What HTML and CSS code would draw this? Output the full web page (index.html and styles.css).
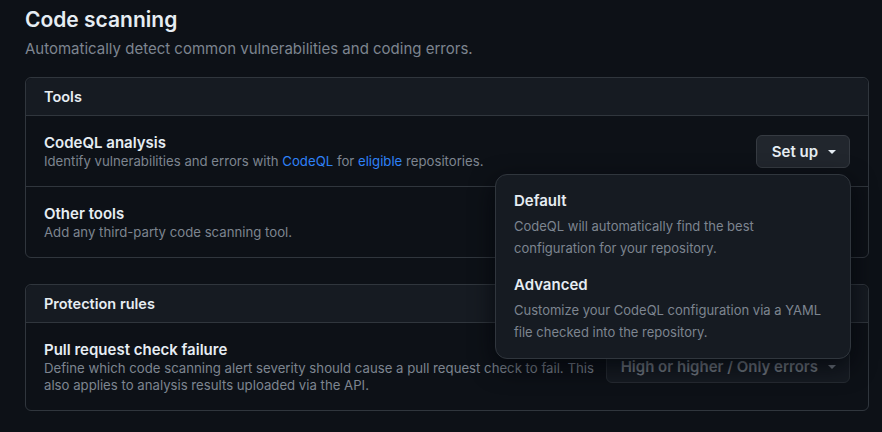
FILE: index.html
```html
<!DOCTYPE html>
<html lang="en">
<head>
<meta charset="utf-8">
<title>Code scanning</title>
<link rel="stylesheet" href="styles.css">
</head>
<body>
<main class="page">
  <h1 class="page-title">Code scanning</h1>
  <p class="page-desc">Automatically detect common vulnerabilities and coding errors.</p>

  <section class="box">
    <div class="box-header">Tools</div>
    <div class="box-row">
      <div class="row-text">
        <div class="row-title">CodeQL analysis</div>
        <div class="row-desc">Identify vulnerabilities and errors with <a class="link" href="#">CodeQL</a> for <a class="link" href="#">eligible</a> repositories.</div>
      </div>
      <div class="menu-anchor">
        <button class="btn" type="button">Set up <span class="caret"></span></button>
        <div class="overlay">
          <div class="overlay-item">
            <div class="overlay-title">Default</div>
            <div class="overlay-desc">CodeQL will automatically find the best configuration for your repository.</div>
          </div>
          <div class="overlay-item">
            <div class="overlay-title">Advanced</div>
            <div class="overlay-desc">Customize your CodeQL configuration via a YAML file checked into the repository.</div>
          </div>
        </div>
      </div>
    </div>
    <div class="box-row">
      <div class="row-text">
        <div class="row-title">Other tools</div>
        <div class="row-desc">Add any third-party code scanning tool.</div>
      </div>
    </div>
  </section>

  <section class="box">
    <div class="box-header">Protection rules</div>
    <div class="box-row">
      <div class="row-text narrow">
        <div class="row-title">Pull request check failure</div>
        <div class="row-desc">Define which code scanning alert severity should cause a pull request check to fail. This also applies to analysis results uploaded via the API.</div>
      </div>
      <button class="btn btn-disabled" type="button">High or higher / Only errors <span class="caret"></span></button>
    </div>
  </section>
</main>
</body>
</html>
```

FILE: styles.css
```css
* { box-sizing: border-box; }

html, body {
  margin: 0;
  padding: 0;
  background: #0d1117;
  color: #e6edf3;
  font-family: Inter, "Noto Sans", "Liberation Sans", sans-serif;
  height: 100%;
}

.page {
  padding: 5px 13px 0 25px;
  width: 882px;
}

.page-title {
  margin: 0;
  font-size: 21px;
  line-height: 30px;
  font-weight: 600;
}

.page-desc {
  margin: 1px 0 0;
  font-size: 15px;
  line-height: 26px;
  color: #7d8590;
}

.box {
  margin-top: 15px;
  border: 1px solid #30363d;
  border-radius: 6px;
  width: 844px;
}

.box + .box { margin-top: 26px; }

.box-header {
  background: #161b22;
  border-bottom: 1px solid #30363d;
  border-radius: 6px 6px 0 0;
  height: 38px;
  display: flex;
  align-items: center;
  padding: 0 18px;
  font-size: 14.5px;
  font-weight: 600;
}

.box-row {
  display: flex;
  align-items: center;
  justify-content: space-between;
  padding: 16px 18px;
}

.box-row + .box-row { border-top: 1px solid #30363d; }

.row-title {
  font-size: 15px;
  line-height: 21px;
  font-weight: 600;
}

.row-desc {
  font-size: 13.2px;
  line-height: 17px;
  color: #7d8590;
}

.narrow { width: 556px; }

.link {
  color: #2f81f7;
  text-decoration: none;
}

.menu-anchor {
  position: relative;
}

.btn {
  display: inline-flex;
  align-items: center;
  gap: 10px;
  height: 33px;
  padding: 0 13px 0 15px;
  border: 1px solid #363b42;
  border-radius: 6px;
  background: #21262d;
  color: #e6edf3;
  font-family: inherit;
  font-size: 15px;
  font-weight: 600;
  white-space: nowrap;
}

.btn-disabled {
  background: #161b22;
  border-color: #262b32;
  color: #737a84;
  padding-left: 14px;
}

.caret {
  width: 0;
  height: 0;
  border-left: 4px solid transparent;
  border-right: 4px solid transparent;
  border-top: 4px solid currentColor;
  margin-top: 1px;
}

.overlay {
  position: absolute;
  right: -1px;
  top: 39px;
  width: 356px;
  padding: 8px 0 7px;
  background: #161b22;
  border: 1px solid #30363d;
  border-radius: 12px;
  box-shadow: 0 8px 24px rgba(1, 4, 9, 0.75);
  z-index: 10;
}

.overlay-item {
  padding: 8px 18px;
}

.overlay-title {
  font-size: 15px;
  line-height: 20px;
  font-weight: 600;
}

.overlay-desc {
  margin-top: 4px;
  font-size: 13px;
  line-height: 22px;
  color: #7d8590;
}
```
